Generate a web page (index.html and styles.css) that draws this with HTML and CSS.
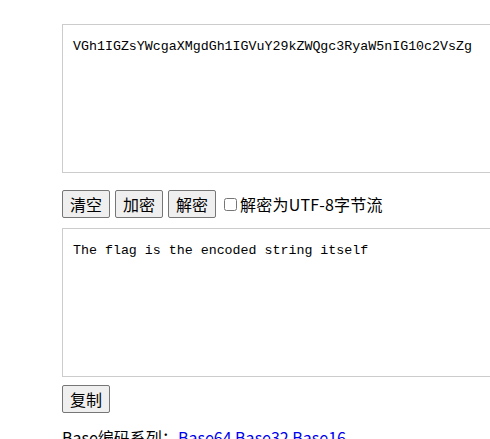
FILE: index.html
```html
<!DOCTYPE html>
<html lang="zh-CN">
<head>
    <meta charset="UTF-8">
    <title>Base64编码解码</title>
    <link rel="stylesheet" href="styles.css">
</head>
<body>
<div class="main">
    <textarea class="box" id="input">VGh1IGZsYWcgaXMgdGh1IGVuY29kZWQgc3RyaW5nIG10c2VsZg</textarea>
    <div class="actions">
        <button type="button">清空</button>
        <button type="button">加密</button>
        <button type="button">解密</button>
        <label class="check"><input type="checkbox">解密为UTF-8字节流</label>
    </div>
    <textarea class="box" id="output">The flag is the encoded string itself</textarea>
    <div class="copy-row">
        <button type="button">复制</button>
    </div>
    <p class="series">Base编码系列：<a href="#">Base64</a> <a href="#">Base32</a> <a href="#">Base16</a></p>
</div>
</body>
</html>
```

FILE: styles.css
```css
html {
    overflow: hidden;
}
body {
    margin: 0;
    font-family: "Noto Sans CJK SC", "Microsoft YaHei", sans-serif;
    font-size: 16px;
}
.main {
    padding: 24px 0 0 62px;
}
.box {
    display: block;
    box-sizing: border-box;
    width: 520px;
    height: 149px;
    margin: 0;
    padding: 14px 10px;
    border: 1px solid #ccc;
    font-family: "Liberation Mono", monospace;
    font-size: 13.3px;
    line-height: 15px;
    color: #000;
    resize: none;
}
.actions {
    display: flex;
    align-items: center;
    gap: 5px;
    margin: 17px 0 10px;
}
.copy-row {
    margin: 8px 0 0;
}
button {
    font-family: "Noto Sans CJK SC", sans-serif;
    font-size: 16px;
    padding: 1px 7px;
    border: 1px solid #767676;
    border-radius: 2px;
    background: #efefef;
    color: #000;
}
.check {
    display: flex;
    align-items: center;
    margin-left: 3px;
    letter-spacing: 0.2px;
}
.check input {
    width: 13px;
    height: 13px;
    margin: 0 3px 0 0;
}
.series {
    margin: 12px 0 0;
}
.series a {
    color: #0000ee;
    text-decoration: none;
}
```
